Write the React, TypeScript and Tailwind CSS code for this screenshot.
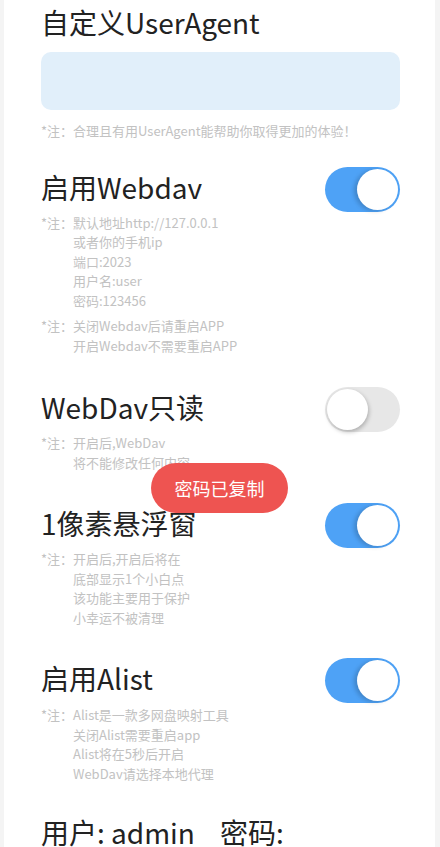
import React from "react";

const font = { fontFamily: '"Noto Sans CJK SC", "Noto Sans", sans-serif' };

function Toggle({ on }: { on: boolean }) {
  return (
    <div
      className={
        "relative h-[45px] w-[75px] shrink-0 rounded-full " +
        (on ? "bg-[#4ea2f6]" : "bg-[#e7e7e7]")
      }
    >
      <div
        className={
          "absolute top-[2px] h-[41px] w-[41px] rounded-full bg-white " +
          (on
            ? "right-[2px] shadow-[-3px_1px_4px_rgba(0,0,0,0.18)]"
            : "left-[2px] shadow-[1px_2px_4px_rgba(0,0,0,0.25)]")
        }
      />
    </div>
  );
}

function Note({ lines }: { lines: string[] }) {
  return (
    <div className="flex text-[13px] leading-[19.5px] text-[#c2c2c2]">
      <span className="w-[32px] shrink-0 whitespace-nowrap">*注：</span>
      <div className="flex flex-col whitespace-nowrap">
        {lines.map((l, i) => (
          <span key={i}>{l}</span>
        ))}
      </div>
    </div>
  );
}

function Row({ title, on }: { title: string; on: boolean }) {
  return (
    <div className="flex h-[45px] items-center justify-between">
      <span className="-mt-[5px] text-[28px] leading-[40px] text-[#222]">{title}</span>
      <Toggle on={on} />
    </div>
  );
}

export default function App() {
  return (
    <div className="relative h-[847px] w-[440px] overflow-hidden bg-[#f4f4f4]" style={font}>
      <div className="mx-[4px] min-h-full w-[431px] bg-white pl-[37px] pr-[35px] pt-[2px]">
        <div className="text-[28px] leading-[40px] text-[#222]">自定义UserAgent</div>
        <div className="mt-[10px] h-[58px] rounded-[10px] bg-[#e1effa]" />
        <div className="mt-[11px]">
          <Note lines={["合理且有用UserAgent能帮助你取得更加的体验！"]} />
        </div>

        <div className="mt-[26px]">
          <Row title="启用Webdav" on={true} />
        </div>
        <div className="mt-[1px]">
          <Note lines={["默认地址http://127.0.0.1", "或者你的手机ip", "端口:2023", "用户名:user", "密码:123456"]} />
        </div>
        <div className="mt-[6px]">
          <Note lines={["关闭Webdav后请重启APP", "开启Webdav不需要重启APP"]} />
        </div>

        <div className="mt-[32px]">
          <Row title="WebDav只读" on={false} />
        </div>
        <div className="mt-[1px]">
          <Note lines={["开启后,WebDav", "将不能修改任何内容"]} />
        </div>

        <div className="mt-[31px]">
          <Row title="1像素悬浮窗" on={true} />
        </div>
        <div className="mt-[1px]">
          <Note lines={["开启后,开启后将在", "底部显示1个小白点", "该功能主要用于保护", "小幸运不被清理"]} />
        </div>

        <div className="mt-[31px]">
          <Row title="启用Alist" on={true} />
        </div>
        <div className="mt-[2px]">
          <Note lines={["Alist是一款多网盘映射工具", "关闭Alist需要重启app", "Alist将在5秒后开启", "WebDav请选择本地代理"]} />
        </div>

        <div className="mt-[29px] whitespace-pre text-[28px] leading-[40px] text-[#222]">用户: admin    密码:</div>
      </div>

      <div className="absolute left-[151px] top-[463px] flex h-[50px] w-[137px] items-center justify-center rounded-full bg-[#ee5451] text-[18px] text-white">
        密码已复制
      </div>
    </div>
  );
}
